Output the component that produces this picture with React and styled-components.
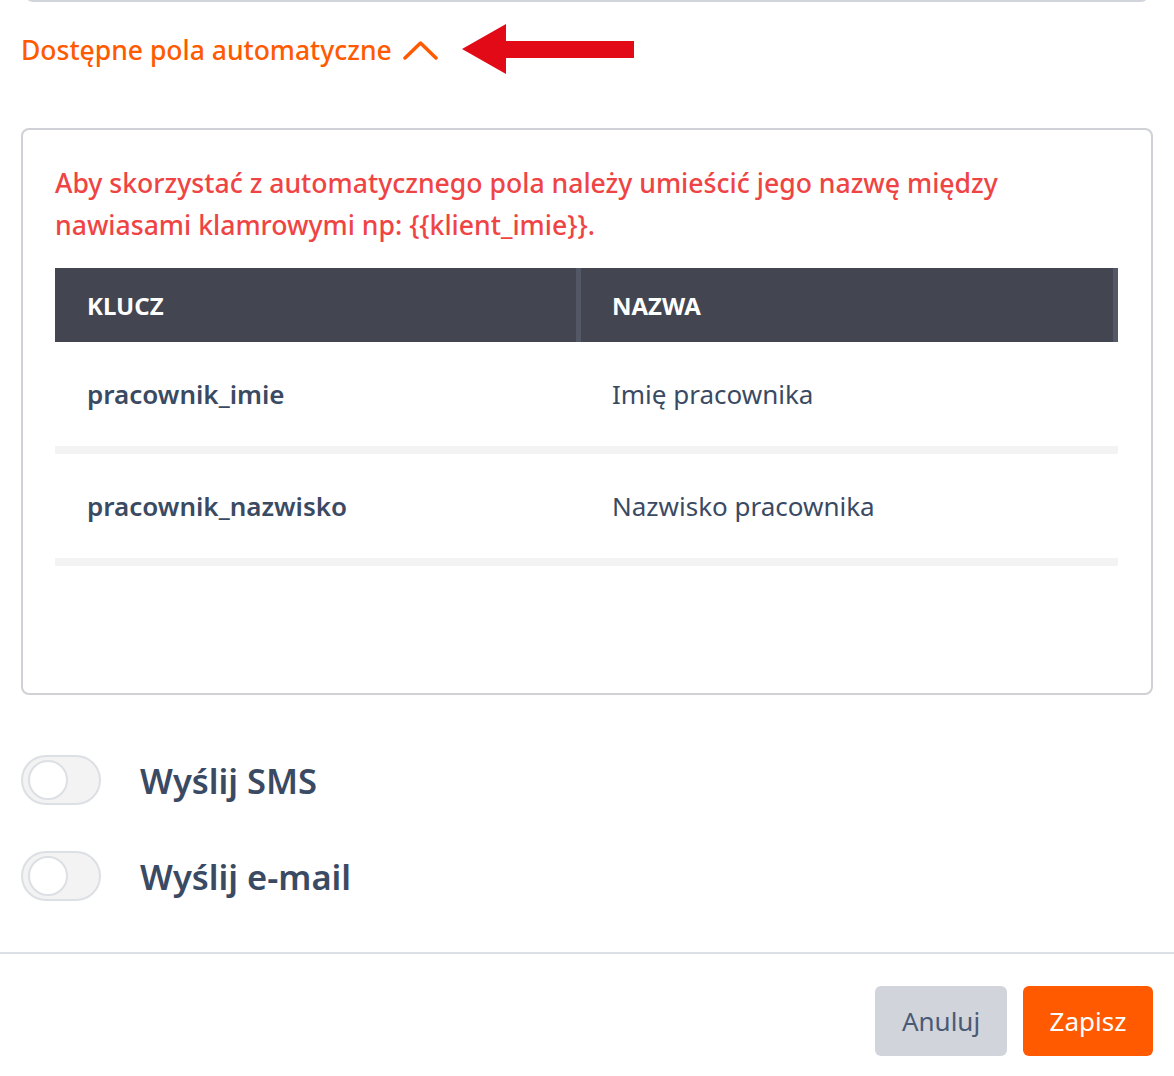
import React from "react";
import styled, { createGlobalStyle } from "styled-components";

const GlobalStyle = createGlobalStyle`
  * { box-sizing: border-box; }
  body {
    margin: 0;
    background: #fff;
    font-family: "Noto Sans", "Open Sans", Arial, sans-serif;
    color: #3b4a63;
  }
`;

const fields = [
  { key: "pracownik_imie", name: "Imię pracownika" },
  { key: "pracownik_nazwisko", name: "Nazwisko pracownika" },
];

const Page = styled.div`
  width: 1174px;
  height: 1076px;
  overflow: hidden;
  display: flex;
  flex-direction: column;
`;

const Content = styled.div`
  padding: 0 21px;
  display: flex;
  flex-direction: column;
`;

const PrevField = styled.div`
  height: 10px;
  margin: -8px 4px 0;
  border: 2px solid #d1d5db;
  border-top: none;
  border-radius: 0 0 8px 8px;
`;

const TitleRow = styled.div`
  display: flex;
  align-items: center;
  height: 48px;
  margin-top: 24px;
`;

const Title = styled.button`
  display: flex;
  align-items: center;
  gap: 11px;
  background: none;
  border: 0;
  padding: 0;
  font-family: inherit;
  font-size: 26.5px;
  font-weight: 500;
  color: #ff5a00;
  cursor: pointer;

  svg {
    width: 35px;
    height: 20px;
  }
`;

const Arrow = styled.svg`
  margin-left: 24px;
  width: 172px;
  height: 52px;
`;

const Box = styled.div`
  margin-top: 54px;
  border: 2px solid #cfd1d6;
  border-radius: 8px;
  padding: 32px 33px 127px 32px;
`;

const Notice = styled.p`
  margin: 0 0 22px;
  font-size: 26.6px;
  line-height: 42px;
  font-weight: 500;
  color: #ef4444;
`;

const Table = styled.div`
  display: flex;
  flex-direction: column;
`;

const HeadRow = styled.div`
  display: grid;
  grid-template-columns: 521px 5px 1fr 5px;
  height: 74px;
  background: #434550;
`;

const HeadCell = styled.div`
  display: flex;
  align-items: center;
  padding-left: ${(p) => p.$pad}px;
  font-size: 24px;
  font-weight: 700;
  color: #fff;
  text-transform: uppercase;
`;

const HeadDivider = styled.div`
  background: #535867;
`;

const BodyRow = styled.div`
  display: grid;
  grid-template-columns: 526px 1fr;
  height: 112px;
  border-bottom: 8px solid #f3f3f3;
`;

const Cell = styled.div`
  display: flex;
  align-items: center;
  padding-left: ${(p) => p.$pad}px;
  font-size: 26px;
  font-weight: ${(p) => (p.$bold ? 600 : 400)};
  color: #3b4a63;
`;

const Toggles = styled.div`
  display: flex;
  flex-direction: column;
  gap: 46px;
  margin-top: 60px;
`;

const ToggleRow = styled.label`
  display: flex;
  align-items: center;
  gap: 39px;
`;

const Switch = styled.span`
  width: 80px;
  height: 50px;
  border-radius: 25px;
  background: #f3f3f3;
  border: 2px solid #dcdfe4;
  display: flex;
  align-items: center;
  padding-left: 5px;

  &::after {
    content: "";
    width: 36px;
    height: 36px;
    border-radius: 50%;
    background: #fff;
    border: 2px solid #dcdfe4;
  }
`;

const ToggleLabel = styled.span`
  font-size: 34.5px;
  font-weight: 600;
  color: #3b4a63;
`;

const Footer = styled.div`
  margin-top: 51px;
  border-top: 2px solid #dcdfe4;
  padding: 32px 21px 0;
  display: flex;
  justify-content: flex-end;
  gap: 16px;
`;

const Button = styled.button`
  height: 70px;
  width: ${(p) => p.$w}px;
  border: 0;
  border-radius: 6px;
  font-family: inherit;
  font-size: 26px;
  background: ${(p) => (p.$primary ? "#ff5a00" : "#d1d5db")};
  color: ${(p) => (p.$primary ? "#fff" : "#4b5a75")};
  cursor: pointer;
`;

export default function App() {
  return (
    <Page>
      <GlobalStyle />
      <Content>
        <PrevField />
        <TitleRow>
          <Title>
            Dostępne pola automatyczne
            <svg viewBox="0 0 35 20" fill="none">
              <path d="M2 18 L17.5 3 L33 18" stroke="#ff5a00" strokeWidth="3.5" strokeLinecap="round" strokeLinejoin="round" />
            </svg>
          </Title>
          <Arrow viewBox="0 0 172 52">
            <polygon points="0,25 44,0 44,17 172,17 172,34 44,34 44,50" fill="#e20a17" />
          </Arrow>
        </TitleRow>
        <Box>
          <Notice>
            Aby skorzystać z automatycznego pola należy umieścić jego nazwę między nawiasami klamrowymi np: {"{{klient_imie}}"}.
          </Notice>
          <Table>
            <HeadRow>
              <HeadCell $pad={32}>Klucz</HeadCell>
              <HeadDivider />
              <HeadCell $pad={31}>Nazwa</HeadCell>
              <HeadDivider />
            </HeadRow>
            {fields.map((f) => (
              <BodyRow key={f.key}>
                <Cell $pad={32} $bold>{f.key}</Cell>
                <Cell $pad={31}>{f.name}</Cell>
              </BodyRow>
            ))}
          </Table>
        </Box>
        <Toggles>
          <ToggleRow>
            <Switch />
            <ToggleLabel>Wyślij SMS</ToggleLabel>
          </ToggleRow>
          <ToggleRow>
            <Switch />
            <ToggleLabel>Wyślij e-mail</ToggleLabel>
          </ToggleRow>
        </Toggles>
      </Content>
      <Footer>
        <Button $w={132}>Anuluj</Button>
        <Button $w={130} $primary>Zapisz</Button>
      </Footer>
    </Page>
  );
}
